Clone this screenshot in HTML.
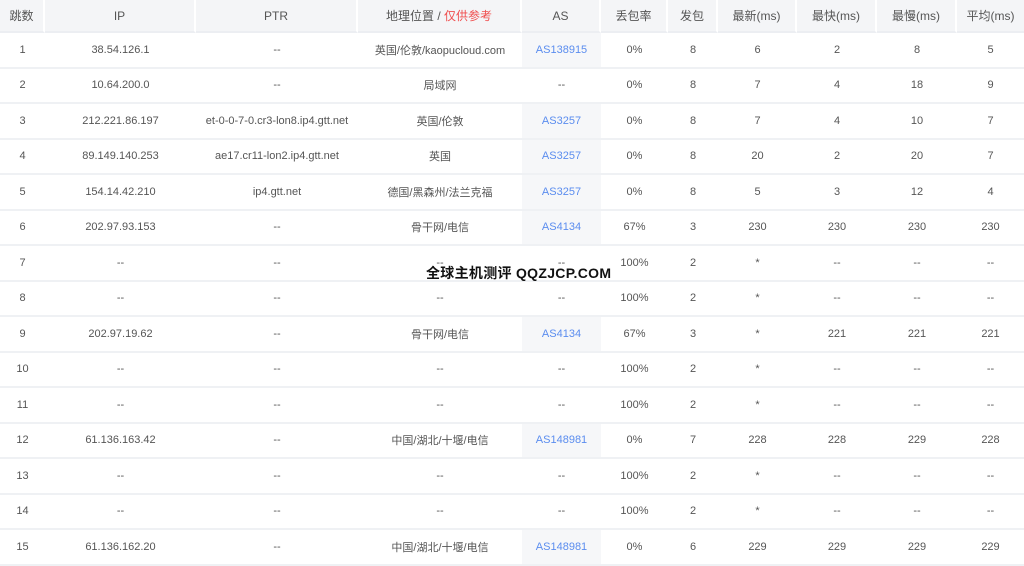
<!DOCTYPE html>
<html><head><meta charset="utf-8"><style>
body{margin:0;background:#fff;width:1024px;height:557px;overflow:hidden;position:relative;font-family:"Liberation Sans","Noto Sans CJK SC",sans-serif;}
table{border-collapse:separate;border-spacing:0;table-layout:fixed;width:1024px;font-size:11px;color:#555;}
th{height:31px;background:#f4f5f7;font-weight:normal;color:#555;font-size:12px;border-right:2px solid #fff;border-bottom:2px solid #eceef2;padding:0;}
td{height:33.5px;text-align:center;border-bottom:2px solid #eff1f4;padding:0;white-space:nowrap;}
.as{color:#5b8def;background:#f6f7f9;}
.r{color:#f04e4e}
.wm{position:absolute;left:426px;top:263px;font-weight:bold;font-size:14px;color:#111;letter-spacing:0.3px;}
</style></head><body>
<table>
<colgroup><col style="width:45px"><col style="width:151px"><col style="width:162px"><col style="width:164px"><col style="width:79px"><col style="width:67px"><col style="width:50px"><col style="width:79px"><col style="width:80px"><col style="width:80px"><col style="width:67px"></colgroup>
<tr><th>跳数</th><th>IP</th><th>PTR</th><th>地理位置 / <span class="r">仅供参考</span></th><th>AS</th><th>丢包率</th><th>发包</th><th>最新(ms)</th><th>最快(ms)</th><th>最慢(ms)</th><th style="border-right:0">平均(ms)</th></tr>
<tr><td>1</td><td>38.54.126.1</td><td>--</td><td>英国/伦敦/kaopucloud.com</td><td class="as">AS138915</td><td>0%</td><td>8</td><td>6</td><td>2</td><td>8</td><td>5</td></tr>
<tr><td>2</td><td>10.64.200.0</td><td>--</td><td>局域网</td><td>--</td><td>0%</td><td>8</td><td>7</td><td>4</td><td>18</td><td>9</td></tr>
<tr><td>3</td><td>212.221.86.197</td><td>et-0-0-7-0.cr3-lon8.ip4.gtt.net</td><td>英国/伦敦</td><td class="as">AS3257</td><td>0%</td><td>8</td><td>7</td><td>4</td><td>10</td><td>7</td></tr>
<tr><td>4</td><td>89.149.140.253</td><td>ae17.cr11-lon2.ip4.gtt.net</td><td>英国</td><td class="as">AS3257</td><td>0%</td><td>8</td><td>20</td><td>2</td><td>20</td><td>7</td></tr>
<tr><td>5</td><td>154.14.42.210</td><td>ip4.gtt.net</td><td>德国/黑森州/法兰克福</td><td class="as">AS3257</td><td>0%</td><td>8</td><td>5</td><td>3</td><td>12</td><td>4</td></tr>
<tr><td>6</td><td>202.97.93.153</td><td>--</td><td>骨干网/电信</td><td class="as">AS4134</td><td>67%</td><td>3</td><td>230</td><td>230</td><td>230</td><td>230</td></tr>
<tr><td>7</td><td>--</td><td>--</td><td>--</td><td>--</td><td>100%</td><td>2</td><td>*</td><td>--</td><td>--</td><td>--</td></tr>
<tr><td>8</td><td>--</td><td>--</td><td>--</td><td>--</td><td>100%</td><td>2</td><td>*</td><td>--</td><td>--</td><td>--</td></tr>
<tr><td>9</td><td>202.97.19.62</td><td>--</td><td>骨干网/电信</td><td class="as">AS4134</td><td>67%</td><td>3</td><td>*</td><td>221</td><td>221</td><td>221</td></tr>
<tr><td>10</td><td>--</td><td>--</td><td>--</td><td>--</td><td>100%</td><td>2</td><td>*</td><td>--</td><td>--</td><td>--</td></tr>
<tr><td>11</td><td>--</td><td>--</td><td>--</td><td>--</td><td>100%</td><td>2</td><td>*</td><td>--</td><td>--</td><td>--</td></tr>
<tr><td>12</td><td>61.136.163.42</td><td>--</td><td>中国/湖北/十堰/电信</td><td class="as">AS148981</td><td>0%</td><td>7</td><td>228</td><td>228</td><td>229</td><td>228</td></tr>
<tr><td>13</td><td>--</td><td>--</td><td>--</td><td>--</td><td>100%</td><td>2</td><td>*</td><td>--</td><td>--</td><td>--</td></tr>
<tr><td>14</td><td>--</td><td>--</td><td>--</td><td>--</td><td>100%</td><td>2</td><td>*</td><td>--</td><td>--</td><td>--</td></tr>
<tr><td>15</td><td>61.136.162.20</td><td>--</td><td>中国/湖北/十堰/电信</td><td class="as">AS148981</td><td>0%</td><td>6</td><td>229</td><td>229</td><td>229</td><td>229</td></tr>
</table>
<div class="wm">全球主机测评 QQZJCP.COM</div>
</body></html>
